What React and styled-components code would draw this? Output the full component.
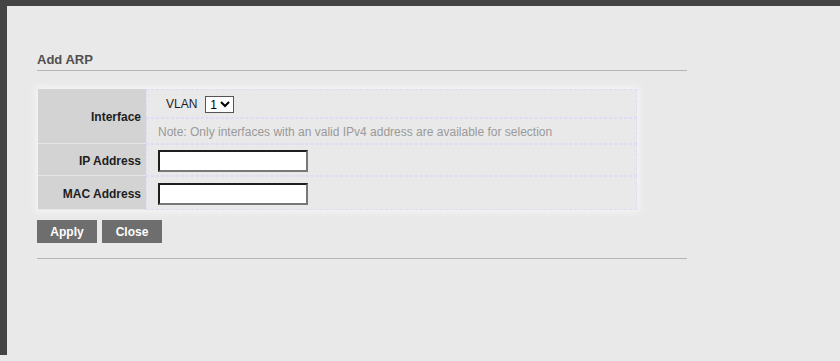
import React from "react";
import styled, { createGlobalStyle } from "styled-components";

const Global = createGlobalStyle`
  html, body { margin: 0; padding: 0; background: #e9e9e9; }
  body { font-family: "Liberation Sans", Arial, sans-serif; }
`;

const Frame = styled.div`
  border-top: 6px solid #444444;
  border-left: 7px solid #444444;
  background: #e9e9e9;
  min-height: calc(100vh - 6px);
  box-sizing: border-box;
  padding: 46px 0 0 30px;
`;

const Section = styled.div`
  width: 650px;
`;

const Title = styled.div`
  font-size: 13px;
  line-height: 15px;
  font-weight: bold;
  color: #505050;
  padding-bottom: 3px;
  border-bottom: 1px solid #b5b5b5;
`;

const Form = styled.div`
  margin: 18px 0 0 1px;
  width: 599px;
  display: grid;
  grid-template-columns: 108px 1fr;
  grid-template-rows: 29px 26px 32px 34px;
  box-shadow: 0 0 7px 2px #f6f6f6;
  background: #e9e9e9;
`;

const Label = styled.div`
  grid-row: ${(p) => p.$row};
  grid-column: 1;
  background: #d3d3d3;
  border-bottom: 1px solid #e6e6e6;
  display: flex;
  align-items: center;
  justify-content: flex-end;
  padding: 2px 5px 0 0;
  font-size: 12px;
  font-weight: bold;
  color: #1e1e1e;
`;

const Cell = styled.div`
  grid-column: 2;
  border: 1px dashed #dcdcf4;
  display: flex;
  align-items: center;
  gap: 8px;
  padding-left: ${(p) => p.$indent || 11}px;
  padding-top: ${(p) => p.$top || 0}px;
  font-size: 12px;
  color: #1e1e1e;
`;

const Note = styled.span`
  color: #9a9a9a;
  font-size: 12px;
`;

const Select = styled.select`
  height: 17px;
  width: 29px;
  font-family: "Liberation Sans", Arial, sans-serif;
  font-size: 12px;
  border: 1px solid #555;
  background: #fff;
  padding: 0;
`;

const Input = styled.input`
  width: 150px;
  height: 22px;
  box-sizing: border-box;
  background: #fff;
  border-style: solid;
  border-width: 2px;
  border-color: #1e1e1e #787878 #787878 #1e1e1e;
  padding: 0 3px;
  font-size: 12px;
`;

const Buttons = styled.div`
  display: flex;
  gap: 5px;
  margin-top: 10px;
  padding-bottom: 15px;
  border-bottom: 1px solid #b5b5b5;
`;

const Button = styled.button`
  width: 60px;
  height: 23px;
  background: #6e6e6e;
  color: #fff;
  border: none;
  font-family: "Liberation Sans", Arial, sans-serif;
  font-size: 12px;
  font-weight: bold;
  padding: 1px 0 0;
  cursor: pointer;
`;

export default function App() {
  return (
    <>
      <Global />
      <Frame>
        <Section>
          <Title>Add ARP</Title>
          <Form>
            <Label $row="1 / span 2">Interface</Label>
            <Cell $indent={19} $top={1}>
              VLAN
              <Select defaultValue="1">
                <option value="1">1</option>
              </Select>
            </Cell>
            <Cell $top={1}>
              <Note>Note: Only interfaces with an valid IPv4 address are available for selection</Note>
            </Cell>
            <Label $row="3">IP Address</Label>
            <Cell $top={2}>
              <Input type="text" />
            </Cell>
            <Label $row="4">MAC Address</Label>
            <Cell $top={2}>
              <Input type="text" />
            </Cell>
          </Form>
          <Buttons>
            <Button>Apply</Button>
            <Button>Close</Button>
          </Buttons>
        </Section>
      </Frame>
    </>
  );
}
